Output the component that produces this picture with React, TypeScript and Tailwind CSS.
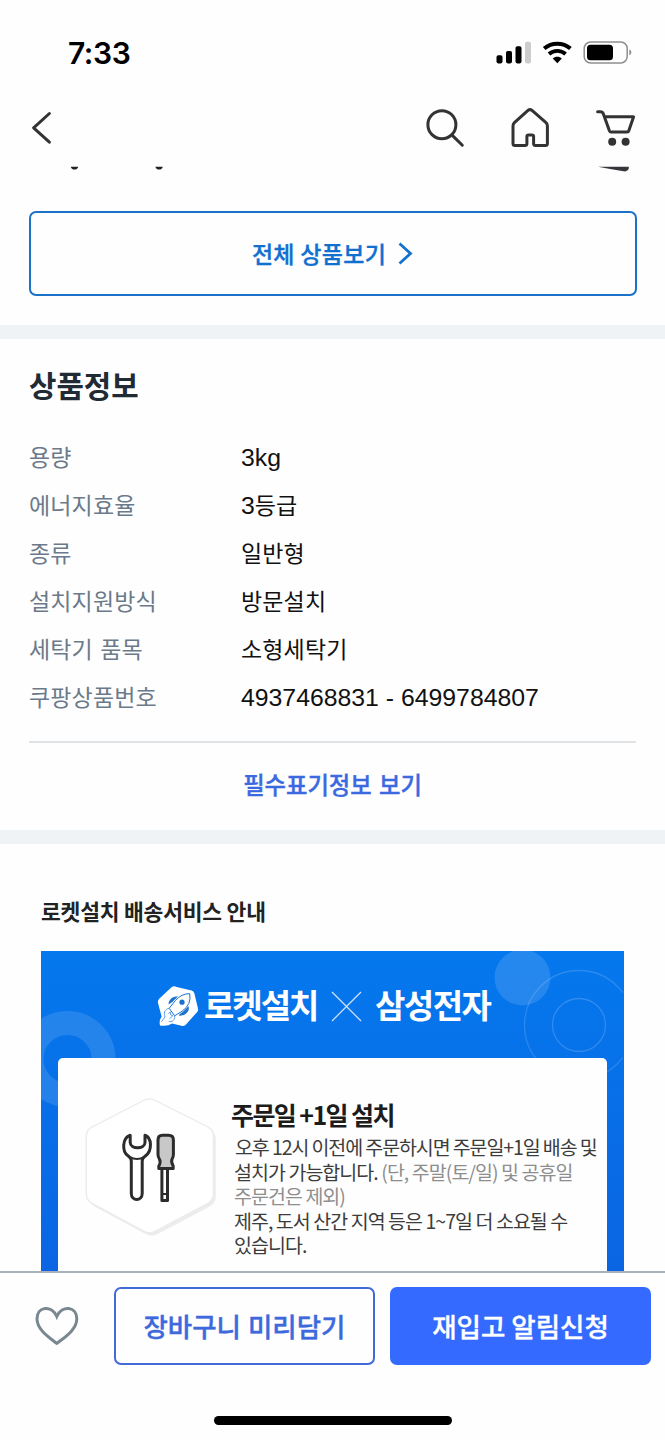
import React from "react";

const specs: { label: string; num?: string; value?: string }[] = [
  { label: "용량", num: "3kg" },
  { label: "에너지효율", num: "3", value: "등급" },
  { label: "종류", value: "일반형" },
  { label: "설치지원방식", value: "방문설치" },
  { label: "세탁기 품목", value: "소형세탁기" },
  { label: "쿠팡상품번호", num: "4937468831 - 6499784807" },
];

function StatusBar() {
  return (
    <div className="flex h-[104px] shrink-0 items-center justify-between pl-[68px] pr-[33px]">
      <span className="pt-[2px] font-['Inter',sans-serif] text-[30px] font-semibold leading-[36px] tracking-[-0.4px] text-black">7:33</span>
      <svg width="137" height="24" viewBox="0 0 137 24" fill="none">
        <rect x="1.5" y="15.2" width="6" height="8.2" rx="1.8" fill="#000" />
        <rect x="11" y="11" width="6" height="12.4" rx="1.8" fill="#000" />
        <rect x="20.5" y="6.2" width="6" height="17.2" rx="1.8" fill="#000" />
        <rect x="30" y="1.8" width="6" height="21.6" rx="1.8" fill="#ccc" />
        <path d="M49.2 8.6 A20 20 0 0 1 75.4 8.6" stroke="#000" strokeWidth="4" />
        <path d="M54 14 A12.6 12.6 0 0 1 70.6 14" stroke="#000" strokeWidth="3.8" />
        <path d="M57.8 18.6 C60.2 16.2 64.4 16.2 66.8 18.6 L62.3 23.2 Z" fill="#000" />
        <rect x="89.2" y="2" width="43" height="21" rx="6.5" stroke="#8e8e8e" strokeWidth="1.5" />
        <rect x="92" y="4.7" width="26" height="15.6" rx="3.6" fill="#000" />
        <path d="M134.3 9.6 C137 10.4 137 14.4 134.3 15.2 Z" fill="#8e8e8e" />
      </svg>
    </div>
  );
}

function NavBar() {
  return (
    <div className="flex h-[62px] shrink-0 items-start justify-between pl-[30px] pr-[29px]">
      <svg width="24" height="48" viewBox="30 104 24 48" fill="none">
        <path d="M49.4 113.5 L33.6 127.8 L49.4 142.2" stroke="#333" strokeWidth="3" strokeLinecap="round" strokeLinejoin="round" />
      </svg>
      <svg width="212" height="48" viewBox="424 104 212 48" fill="none" stroke="#333" strokeWidth="3" strokeLinecap="round" strokeLinejoin="round">
        <circle cx="441.9" cy="124.7" r="14" />
        <path d="M452.3 135.4 L462.3 145.2" />
        <path d="M528 110.4 Q530 108.8 532 110.4 L546 122.7 Q547.4 124 547.4 126 V143.6 Q547.4 145.6 545.4 145.6 H535.6 Q533.6 145.6 533.6 143.6 V136.6 Q533.6 134.9 531.9 134.9 H528.6 Q526.9 134.9 526.9 136.6 V143.6 Q526.9 145.6 524.9 145.6 H515 Q513 145.6 513 143.6 V126 Q513 124 514.4 122.7 Z" />
        <path d="M597.6 111.8 H600.4 Q602.6 111.8 603.4 114 L609.4 130.8 Q609.9 132.1 611.2 132.1 H627 Q628.4 132.1 628.8 130.8 L633.6 116.8 H604.8" />
        <circle cx="612.2" cy="141.7" r="4" fill="#333" stroke="none" />
        <circle cx="625.6" cy="141.7" r="4" fill="#333" stroke="none" />
      </svg>
    </div>
  );
}

function RocketLogo() {
  return (
    <svg width="42" height="42" viewBox="157 985 42 42" fill="none">
      <path d="M171.5 987.2 Q174 985.6 176.6 986.9 L191.6 990.6 Q193.8 991.2 194.4 993.4 L198 1008.6 Q198.6 1010.6 197 1012.2 L186 1024.4 Q184 1026.4 181.4 1025.8 L172 1023.4 Q168 1026.4 160 1025.4 Q158.8 1021 161.6 1016.6 L158 1003 Q157.4 1000.6 159.2 998.8 Z" fill="#fff" />
      <path d="M189.7 993.6 Q181.5 993.6 175.3 1000.6 L169.2 1008.3 L174.6 1015.8 L182 1011.3 Q191.8 1004.6 189.7 993.6 Z" stroke="#1b72cf" strokeWidth="1" />
      <path d="M178 996.6 C172.6 995.4 168.6 1000 168.5 1004.3 C171.3 1003.7 173.8 1000.6 178 996.6 Z" fill="#1b72cf" />
      <path d="M188.3 1006 C190.6 1010.6 185.8 1016 178.8 1015.8 C179 1013.5 184.6 1011.6 188.3 1006 Z" fill="#1b72cf" />
      <circle cx="182" cy="1002.2" r="2.6" fill="#1b72cf" />
      <path d="M169 1008.3 C164.5 1009.2 163.4 1013.4 165 1017 M174.6 1015.8 C175.4 1019.7 172 1022.6 168.7 1021.4 M168.4 1013.5 L170.3 1012 L170.8 1015 L173 1015.6 L169.5 1018.8 M165 1017 L161.4 1021.8" stroke="#4b94e2" strokeWidth="0.9" />
    </svg>
  );
}

function ToolsBadge() {
  return (
    <svg width="140" height="150" viewBox="80 1090 140 150" fill="none" className="shrink-0">
      <path d="M143.5 1100.5 Q149.5 1097.3 155.5 1100.5 L208 1127 Q213.5 1130 213.5 1136 V1194 Q213.5 1200 208 1203.3 L155.5 1231 Q149.5 1234.5 143.5 1231 L92 1203.3 Q86.3 1200 86.3 1194 V1136 Q86.3 1130 92 1127 Z" fill="#ececec" transform="translate(2.2 3)" />
      <path d="M143.5 1100.5 Q149.5 1097.3 155.5 1100.5 L208 1127 Q213.5 1130 213.5 1136 V1194 Q213.5 1200 208 1203.3 L155.5 1231 Q149.5 1234.5 143.5 1231 L92 1203.3 Q86.3 1200 86.3 1194 V1136 Q86.3 1130 92 1127 Z" fill="#fff" stroke="#ebebeb" strokeWidth="1.4" />
      <g stroke="#2c2c2c" strokeWidth="3" strokeLinejoin="round" strokeLinecap="round">
        <path d="M130.2 1135.2 C122.5 1137.5 121.5 1151 128 1155.8 C129.7 1157 131.3 1158 131.3 1161 V1193.5 C131.3 1201.4 142.2 1201.4 142.2 1193.5 V1161 C142.2 1158 144 1157 145.6 1155.8 C152.3 1151 152 1137.5 145 1135.2 V1142.5 C145 1149.5 130.2 1149.5 130.2 1142.5 Z" />
        <path d="M129.5 1157 Q137 1161 144.5 1157" strokeWidth="2.2" />
        <rect x="161.9" y="1168" width="5.6" height="32.5" />
        <path d="M162 1194 H167.5" strokeWidth="2.2" />
        <path d="M162.5 1135.2 H168.5 Q173.4 1135.2 173.4 1140 V1154.5 Q173.4 1157 171.9 1159.5 Q171 1162.5 173.2 1166 V1168.6 H158.8 V1166 Q161 1162.5 159.6 1159.5 Q158 1157 158 1154.5 V1140 Q158 1135.2 162.5 1135.2 Z" fill="#c8c8c8" />
      </g>
    </svg>
  );
}

function Banner() {
  return (
    <div className="relative flex h-[321px] shrink-0 flex-col overflow-hidden bg-linear-to-b from-[#0578ed] to-[#0b65e2]">
      <svg className="absolute inset-0" width="582" height="321" viewBox="41 951 582 321" fill="none">
        <circle cx="67.5" cy="1059" r="36" stroke="#fff" strokeOpacity="0.12" strokeWidth="24" />
        <circle cx="522.5" cy="977.5" r="28" fill="#fff" fillOpacity="0.13" />
        <circle cx="579" cy="1025" r="26.5" stroke="#fff" strokeOpacity="0.17" strokeWidth="1.3" />
        <circle cx="579" cy="1025" r="54.5" stroke="#fff" strokeOpacity="0.15" strokeWidth="1.3" />
      </svg>
      <div className="relative flex h-[107px] shrink-0 items-start pl-[116px] pt-[34px] text-[33px] font-bold leading-[42px] text-white">
        <RocketLogo />
        <span className="-mt-[2px] ml-[5px] w-[128px] whitespace-nowrap tracking-[-2px]">로켓설치</span>
        <svg width="31" height="42" viewBox="0 0 31 42" fill="none" className="-ml-px shrink-0">
          <path d="M1 7 L30 36 M30 7 L1 36" stroke="#cfe3fb" strokeWidth="1.3" />
        </svg>
        <span className="-mt-[2px] ml-[13px] whitespace-nowrap tracking-[-1.5px]">삼성전자</span>
      </div>
      <div className="relative ml-[17px] flex h-[214px] w-[549px] rounded-t-[5px] bg-[#fefefe] pl-[22px] pt-[32px]">
        <ToolsBadge />
        <div className="ml-[11px] flex flex-col whitespace-nowrap pt-[8px] text-[19.5px] leading-[24.5px] text-[#3c3c3c]">
          <h3 className="h-[37px] text-[25px] font-bold leading-[33px] tracking-[-1.6px] text-[#1c1c1c]">주문일 +1일 설치</h3>
          <p className="pl-[4px] tracking-[-1.1px]">오후 12시 이전에 주문하시면 주문일+1일 배송 및</p>
          <p className="pl-[3px] tracking-[-0.95px]">설치가 가능합니다. <span className="text-[#8e8e8e]">(단, 주말(토/일) 및 공휴일</span></p>
          <p className="pl-[3px] tracking-[-0.95px] text-[#8e8e8e]">주문건은 제외)</p>
          <p className="pl-[3px] tracking-[-0.95px]">제주, 도서 산간 지역 등은 1~7일 더 소요될 수</p>
          <p className="pl-[3px] tracking-[-0.95px]">있습니다.</p>
        </div>
      </div>
    </div>
  );
}

export default function App() {
  return (
    <div className="flex h-[1440px] w-[665px] flex-col overflow-hidden bg-[#fefefe] font-['Noto_Sans_CJK_KR',sans-serif]">
      <StatusBar />
      <NavBar />
      <main className="flex h-[1105px] shrink-0 flex-col overflow-hidden">
        <svg width="665" height="45" viewBox="0 166 665 45" className="shrink-0">
          <path d="M70.8 166.8 H78.2 Q77.6 169.6 74.5 169.6 Q71.4 169.6 70.8 166.8 Z" fill="#222" />
          <path d="M155.4 166.8 H162.8 Q162.2 169.6 159.1 169.6 Q156 169.6 155.4 166.8 Z" fill="#222" />
          <path d="M598 166.8 H628.8 Q629.4 170.6 625 171.4 Q611 169.4 598 166.8 Z" fill="#38363c" />
        </svg>
        <button className="mr-[28.5px] ml-[28.5px] flex h-[85px] shrink-0 items-center justify-center gap-[12px] rounded-[7px] border-2 border-[#1a72c9] pb-[1px] text-[23px] font-medium tracking-[0.3px] text-[#0f70d0] [-webkit-text-stroke:0.35px_#0f70d0]">
          전체 상품보기
          <svg width="15" height="26" viewBox="0 0 15 26" fill="none">
            <path d="M1.5 3.5 L12.5 13.5 L1.5 23.5" stroke="#1472cf" strokeWidth="2.8" />
          </svg>
        </button>
        <div className="mt-[29px] h-[14px] shrink-0 bg-[#eff3f6]" />
        <section className="flex h-[491px] shrink-0 flex-col px-[29px]">
          <h2 className="mt-[24px] text-[29.8px] font-bold leading-[42px] text-[#212b36]">상품정보</h2>
          <dl className="mt-[27px] flex flex-col text-[23px] leading-[48px] tracking-[0.15px]">
            {specs.map((s) => (
              <div key={s.label} className="flex h-[48px]">
                <dt className="w-[212px] text-[#6b7a8a] [word-spacing:2px]">{s.label}</dt>
                <dd className="flex whitespace-nowrap text-[#111]">
                  {s.num && <span className="pt-[2px] font-['Liberation_Sans',sans-serif] text-[24.8px] tracking-normal">{s.num}</span>}
                  {s.value}
                </dd>
              </div>
            ))}
          </dl>
          <div className="mt-[21px] h-[2px] shrink-0 bg-[#e0e4e6]" />
          <a className="mt-[19px] text-center text-[23.3px] font-medium leading-[44px] text-[#3b69e0] [-webkit-text-stroke:0.35px_#3b69e0] [word-spacing:2px]">필수표기정보 보기</a>
        </section>
        <div className="h-[14px] shrink-0 bg-[#eff3f6]" />
        <section className="flex shrink-0 flex-col px-[41px] pt-[50px]">
          <h2 className="h-[57px] text-[21.5px] font-bold leading-[34px] tracking-[-0.2px] text-[#222]">로켓설치 배송서비스 안내</h2>
          <Banner />
        </section>
      </main>
      <footer className="flex h-[169px] shrink-0 flex-col border-t-2 border-[#a9b0bd]">
        <div className="flex gap-[15px] pr-[14px] pt-[14px]">
          <svg width="99" height="79" viewBox="0 1287 99 79" fill="none" className="shrink-0">
            <path d="M56.8 1343.4 C48.5 1337 37 1329.5 37 1318.8 C37 1306.5 51.5 1304.5 56.8 1316.5 C62.1 1304.5 76.8 1306.5 76.8 1318.8 C76.8 1329.5 65.1 1337 56.8 1343.4 Z" stroke="#788790" strokeWidth="3" strokeLinejoin="miter" />
          </svg>
          <button className="h-[78px] w-[261px] rounded-[7px] border-2 border-[#4169d8] pb-[1px] text-[26.5px] font-medium text-[#3d69dc] [-webkit-text-stroke:0.35px_#3d69dc] [word-spacing:1px]">장바구니 미리담기</button>
          <button className="h-[78px] w-[261px] rounded-[7px] bg-[#346aff] pb-[1px] text-[26.5px] font-medium text-white [-webkit-text-stroke:0.35px_#fff]">재입고 알림신청</button>
        </div>
        <div className="mx-auto mt-[50px] h-[9px] w-[238px] rounded-full bg-black" />
      </footer>
    </div>
  );
}
